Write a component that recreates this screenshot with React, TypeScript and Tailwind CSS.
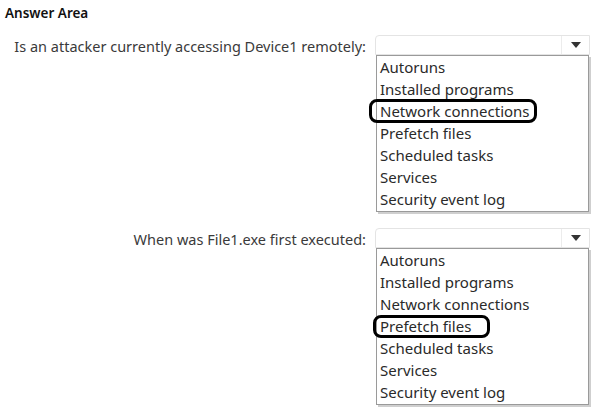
const options = [
  'Autoruns',
  'Installed programs',
  'Network connections',
  'Prefetch files',
  'Scheduled tasks',
  'Services',
  'Security event log',
];

function Question({ label, circled, ring }: { label: string; circled: string; ring: string }) {
  return (
    <div className="flex items-start">
      <div className="w-[375px] pr-[9px] pt-[1px] text-right text-[14.5px] leading-[20px] text-[#3a3a3a]">{label}</div>
      <div className="w-[215px]">
        {/* closed select */}
        <div className="flex h-[20px] rounded-tl-[4px] border border-[#e4e4e4] bg-white">
          <div className="flex-1" />
          <div className="flex w-[28px] items-center justify-center border-l border-[#ececec]">
            <svg width="10" height="6" viewBox="0 0 10 6">
              <path d="M0 0h10L5 6z" fill="#333" />
            </svg>
          </div>
        </div>
        {/* open list */}
        <div className="ml-[1px] w-[213px] border border-[#9a9a9a] bg-white pb-[1px] shadow-[2px_2px_0_#cfcfcf]">
          {options.map((opt) => (
            <div key={opt} className="flex h-[22px] items-center pl-[3px] text-[15px] text-[#2a2a2a]">
              <span className={opt === circled ? ring : ''}>{opt}</span>
            </div>
          ))}
        </div>
      </div>
    </div>
  );
}

export default function App() {
  return (
    <div className="h-[407px] w-[596px] bg-white font-['Noto_Sans',sans-serif]">
      <div className="pl-[5px] pt-[4px] text-[13.5px] font-semibold leading-[18px] text-[#111]">Answer Area</div>
      <div className="mt-[13px]">
        <Question
          label="Is an attacker currently accessing Device1 remotely:"
          circled="Network connections"
          ring="-my-[1px] -ml-[11px] rounded-[8px] border-[3px] border-black pl-[8px] pr-[4px] leading-[18px]"
        />
      </div>
      <div className="mt-[16px]">
        <Question
          label="When was File1.exe first executed:"
          circled="Prefetch files"
          ring="-my-[1px] -ml-[7px] rounded-[8px] border-[3px] border-black pl-[4px] pr-[16px] leading-[17px]"
        />
      </div>
    </div>
  );
}
